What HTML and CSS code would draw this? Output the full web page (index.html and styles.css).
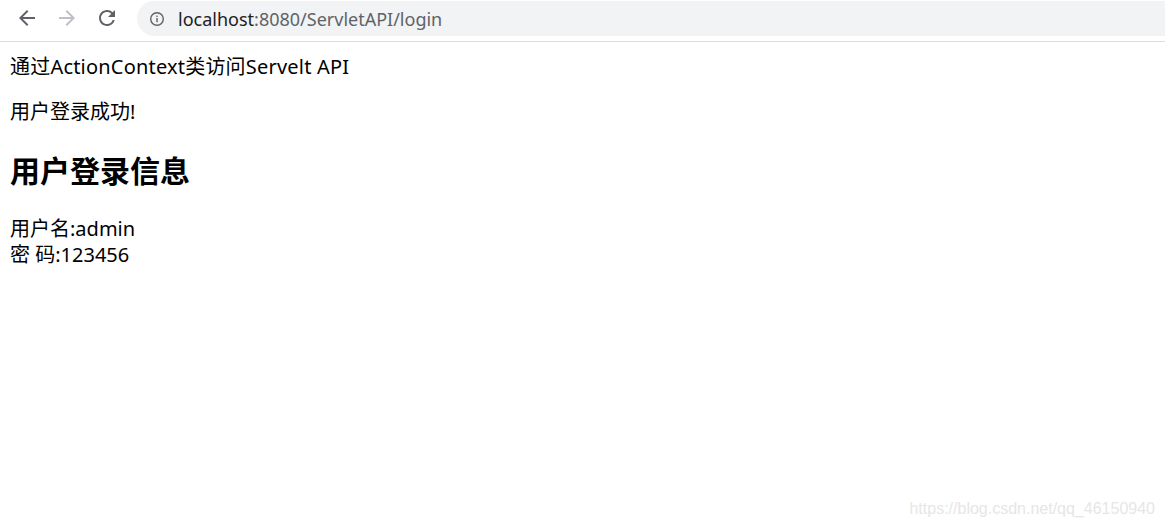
FILE: index.html
```html
<!DOCTYPE html>
<html lang="zh-CN">
<head>
<meta charset="utf-8">
<title>login</title>
<link rel="stylesheet" href="styles.css">
</head>
<body>
<div class="toolbar">
  <div class="nav">
    <span class="navbtn">
      <svg width="24" height="24" viewBox="0 0 24 24"><path d="M20 11H7.83l5.59-5.59L12 4l-8 8 8 8 1.41-1.41L7.83 13H20v-2z" fill="#5f6368"/></svg>
    </span>
    <span class="navbtn">
      <svg width="24" height="24" viewBox="0 0 24 24"><path d="M4 13h12.17l-5.59 5.59L12 20l8-8-8-8-1.41 1.41L16.17 11H4v2z" fill="#bdc1c6"/></svg>
    </span>
    <span class="navbtn">
      <svg width="24" height="24" viewBox="0 0 24 24"><path d="M17.65 6.35A7.958 7.958 0 0 0 12 4c-4.42 0-7.99 3.58-7.99 8s3.57 8 7.99 8c3.730 0 6.840-2.55 7.730-6h-2.08A5.99 5.99 0 0 1 12 18c-3.31 0-6-2.690-6-6s2.690-6 6-6c1.66 0 3.140.69 4.220 1.78L13 11h7V4l-2.35 2.35z" fill="#5f6368"/></svg>
    </span>
  </div>
  <div class="omnibox">
    <svg class="info" width="16" height="16" viewBox="0 0 16 16"><circle cx="8" cy="8" r="6.3" fill="none" stroke="#5f6368" stroke-width="1.4"/><rect x="7.3" y="7" width="1.4" height="4.2" fill="#5f6368"/><rect x="7.3" y="4.6" width="1.4" height="1.4" fill="#5f6368"/></svg>
    <span class="url"><span class="host">localhost</span>:8080/ServletAPI/login</span>
  </div>
</div>
<div class="page">
  <span class="title">通过ActionContext类访问Servelt API</span>
  <p>用户登录成功!</p>
  <h2>用户登录信息</h2>
  <div class="info-lines">用户名:admin<br>密 码:123456</div>
</div>
<div class="watermark">https://blog.csdn.net/qq_46150940</div>
</body>
</html>
```
FILE: styles.css
```css
html, body {
  margin: 0;
  padding: 0;
  background: #fff;
}
body {
  position: relative;
  width: 1165px;
  height: 527px;
  overflow: hidden;
}
.toolbar {
  height: 41px;
  border-bottom: 1px solid #dadce0;
  display: flex;
  align-items: flex-start;
  background: #fff;
}
.nav {
  display: flex;
  padding-left: 7px;
  padding-top: 6px;
}
.navbtn {
  width: 40px;
  height: 24px;
  display: flex;
  justify-content: center;
  align-items: center;
}
.omnibox {
  margin-left: 10px;
  margin-top: 1px;
  flex: 1;
  height: 35px;
  background: #f1f3f4;
  border-radius: 18px 0 0 18px;
  display: flex;
  align-items: center;
  padding-left: 12px;
}
.info {
  margin-right: 13px;
}
.url {
  font-family: "Noto Sans", "Open Sans", sans-serif;
  font-size: 18px;
  color: #5f6368;
}
.host {
  color: #202124;
}
.page {
  margin: 12px 10px 10px;
  font-family: "Noto Sans", "Noto Sans CJK SC", sans-serif;
  font-size: 20px;
  line-height: 26.5px;
  color: #000;
}
.title {
  letter-spacing: 0.2px;
}
.page p {
  margin: 18px 0 20px;
}
.page h2 {
  font-size: 30px;
  line-height: 40px;
  margin: 26px 0 25px;
  font-weight: bold;
}
.info-lines {
  line-height: 26px;
}
.watermark {
  position: absolute;
  right: 10px;
  bottom: 9px;
  font-family: "Liberation Sans", Arial, sans-serif;
  font-size: 16px;
  color: #e6e6e6;
}
```
